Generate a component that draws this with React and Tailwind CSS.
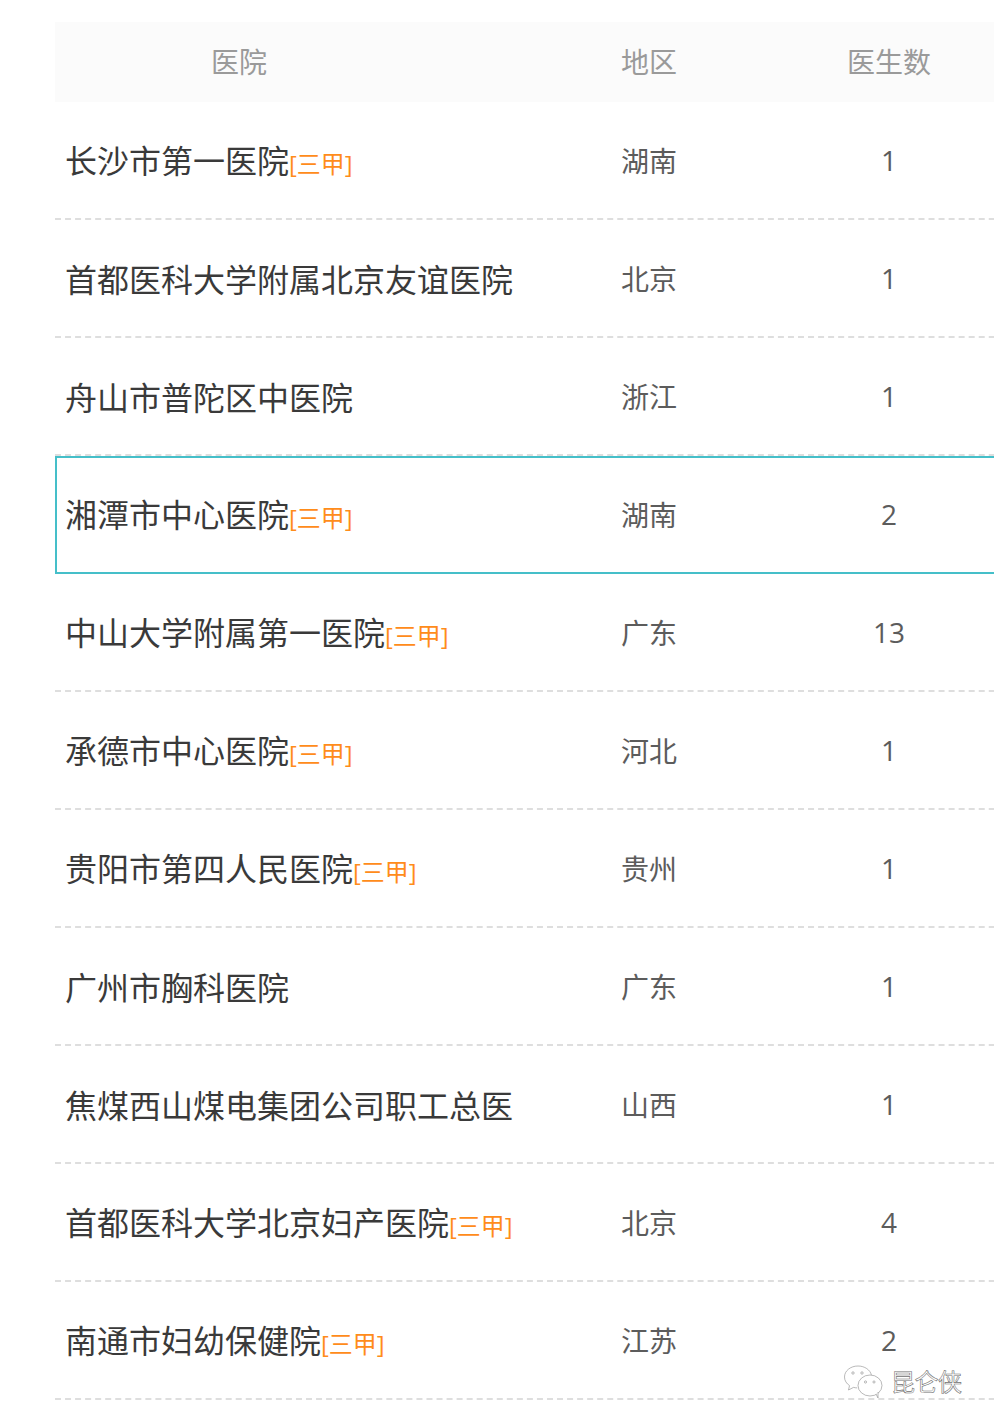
const rows = [
  ["长沙市第一医院", true, "湖南", "1"],
  ["首都医科大学附属北京友谊医院", false, "北京", "1"],
  ["舟山市普陀区中医院", false, "浙江", "1"],
  ["湘潭市中心医院", true, "湖南", "2", true],
  ["中山大学附属第一医院", true, "广东", "13"],
  ["承德市中心医院", true, "河北", "1"],
  ["贵阳市第四人民医院", true, "贵州", "1"],
  ["广州市胸科医院", false, "广东", "1"],
  ["焦煤西山煤电集团公司职工总医", false, "山西", "1"],
  ["首都医科大学北京妇产医院", true, "北京", "4"],
  ["南通市妇幼保健院", true, "江苏", "2"],
];

const font = { fontFamily: '"Open Sans", "Noto Sans CJK SC", sans-serif' };

function Wechat() {
  return (
    <svg width="40" height="34" viewBox="0 0 40 34" fill="none" stroke="#8a8a8a" strokeWidth="0.6">
      <path d="M15 1C7.5 1 1.5 5.8 1.5 12c0 3.6 2 6.6 5 8.6L5.5 25l5-2.6c1.3.3 2.6.5 3.7.5" fill="#fff" />
      <path d="M15 1c6.6 0 12.2 3.8 13.4 9" />
      <ellipse cx="27" cy="20.5" rx="12" ry="10.5" fill="#fff" />
      <path d="M33 29l2 4 0-6" fill="#fff" />
      <circle cx="10" cy="8" r="1.2" />
      <circle cx="19" cy="8" r="1.2" />
      <circle cx="22.5" cy="17" r="1.1" />
      <circle cx="31" cy="17" r="1.1" />
    </svg>
  );
}

export default function App() {
  return (
    <div className="relative w-[994px] h-[1425px] overflow-hidden bg-white pt-[22px] pl-[55px]" style={font}>
      <div className="w-[1000px]">
        <div className="flex h-[80px] items-center bg-[#fbfbfb] text-[28px] leading-[40px] text-[#9a9a9a]">
          <div className="w-[370px] pr-[2px] text-center">医院</div>
          <div className="ml-[196px] w-[56px]">地区</div>
          <div className="ml-[170px]">医生数</div>
        </div>
        {rows.map(([name, tag, region, count, active]) => (
          <div
            key={name}
            className={
              "flex h-[118px] items-center " +
              (active ? "border-2 border-[#45bfc9] pb-[2px]" : "border-b-2 border-dashed border-[#dedede]")
            }
          >
            <div className={(active ? "w-[564px] pl-[8px]" : "w-[566px] pl-[10px]") + " whitespace-nowrap pt-[4px] text-[32px] leading-[46px] text-[#3a3a3a]"}>
              {name}
              <span className={tag ? "text-[24px] text-[#ff8c1a]" : "hidden"}>[三甲]</span>
            </div>
            <div className="w-[197px] pt-[2px] text-[28px] leading-[40px] text-[#5c5c5c]">{region}</div>
            <div className="w-[142px] text-center text-[28px] leading-[40px] text-[#5c5c5c]">{count}</div>
          </div>
        ))}
      </div>
      <div className="absolute left-[843px] top-[1364px] flex items-center gap-[8px]">
        <Wechat />
        <span className="text-[24px] tracking-[-0.5px] text-white [-webkit-text-stroke:0.6px_#6f6f6f]">昆仑侠</span>
      </div>
    </div>
  );
}
